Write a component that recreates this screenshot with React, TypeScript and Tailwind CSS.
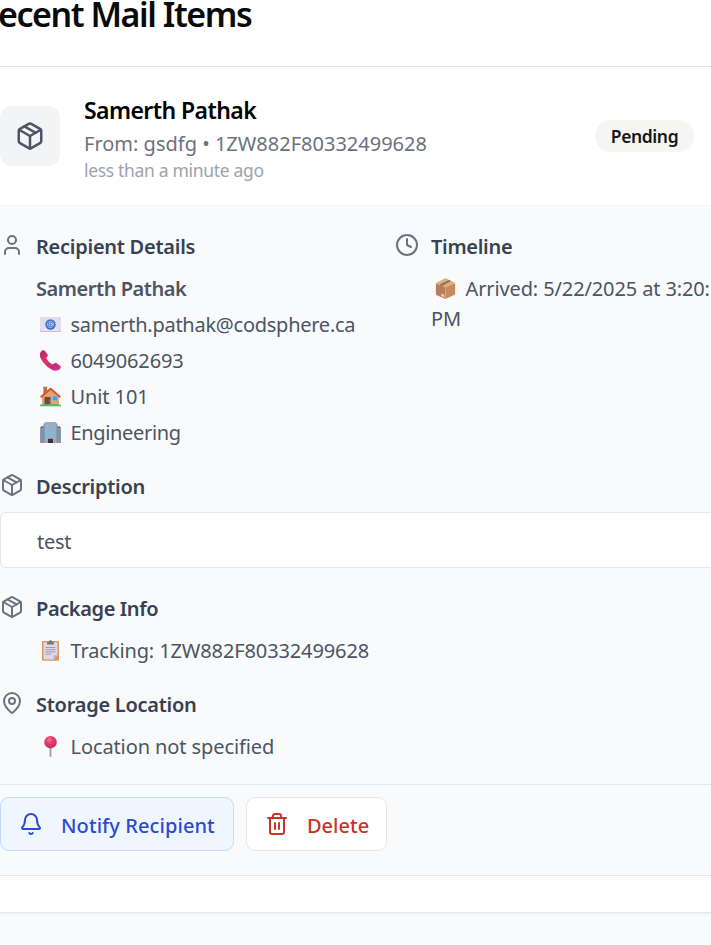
import type { ReactNode } from 'react';
import { Package, User, Clock, MapPin, Bell, Trash2 } from 'lucide-react';

function EnvelopeEmoji() {
  return (
    <svg width="21" height="21" viewBox="0 0 21 21">
      <rect x="0" y="3" width="21" height="15" rx="0.6" fill="#e5dcee" />
      <path d="M0 17.6L8 11h5l8 6.6z" fill="#ece5f4" />
      <path d="M0 3.6L9 11M21 3.6L12 11M0 17L7 12M21 17L14 12" stroke="#d2c6df" strokeWidth="0.5" />
      <path d="M0 17.4h21" stroke="#cdb5e3" strokeWidth="1" />
      <circle cx="10.5" cy="10.5" r="5.2" fill="#3c73c9" />
      <circle cx="10.5" cy="10.5" r="1.5" fill="none" stroke="#d9e4fa" strokeWidth="0.9" />
      <path d="M12.1 9v2.2c0 1.3 1.6 1 1.6-.7a3.2 3.2 0 1 0-1.6 2.8" fill="none" stroke="#c7d8f5" strokeWidth="0.7" />
    </svg>
  );
}

function PhoneEmoji() {
  return (
    <svg width="21" height="21" viewBox="0 0 21 21">
      <defs>
        <linearGradient id="phoneBody" x1="0" y1="0" x2="1" y2="1">
          <stop offset="0" stopColor="#a92c72" />
          <stop offset="0.35" stopColor="#e0335f" />
          <stop offset="0.75" stopColor="#c5307f" />
          <stop offset="1" stopColor="#d33aa0" />
        </linearGradient>
      </defs>
      <path d="M1.1 1.5C2.3.3 3.6-.3 4.6.6l2.800 3.600c.7 1 .5 1.900-.4 2.700-.7.6-.7 1.200-.2 2 1.400 2.300 2.700 3.700 5.100 5.100.8.5 1.400.4 2-.3.8-.9 1.800-1.200 2.800-.5l3.500 2.600c1.100.9.6 2.300-.7 3.500-1.500 1.500-4.500 1.900-7.200.600C7.600 17.700 3.100 13.100.5 8.100-.500 5.400-.2 2.900 1.100 1.500z" fill="url(#phoneBody)" />
      <path d="M2 1.200l4.800 5M14.300 14.200l5.300 5" stroke="#8f2c78" strokeWidth="0.800" opacity="0.5" />
    </svg>
  );
}

function HouseEmoji() {
  return (
    <svg width="21" height="21" viewBox="0 0 21 21">
      <rect x="3.400" y="1" width="3.600" height="8" fill="#a8764f" />
      <rect x="3" y="0.700" width="4.400" height="1.500" fill="#bd8a5c" />
      <path d="M2 10L10.500 3l8.500 7v9H2z" fill="#dfa76d" />
      <path d="M0 10.600L9.600 2.200c.7-.6 1.300-.6 2 0L21 10.600l-1.400 1.300-9-7.900-9.100 7.900z" fill="#e8502f" />
      <rect x="4.500" y="11" width="6" height="8" fill="#73493f" />
      <path d="M9 15h.8" stroke="#dca96f" strokeWidth="0.700" />
      <rect x="12.500" y="10" width="5" height="4.700" fill="#3ea4ea" stroke="#96c3dc" strokeWidth="0.600" />
      <path d="M0 18.800c3-1 18-1 21 0V20.300H0z" fill="#5bb263" />
    </svg>
  );
}

function BuildingEmoji() {
  const rows = [2.6, 6.2, 9.8, 13.4];
  return (
    <svg width="21" height="21" viewBox="0 0 21 21">
      <rect x="0" y="5" width="21" height="16" fill="#9693a7" />
      <rect x="1" y="4.200" width="3" height="2" fill="#777489" />
      <rect x="17" y="4.200" width="3" height="2" fill="#777489" />
      <path d="M4 1.500L5.500 0h10L17 1.500V21H4z" fill="#aaa6b7" />
      <path d="M4 1.500V21M17 1.500V21" stroke="#817d91" strokeWidth="0.700" />
      {rows.map((y) => (
        <g key={y} fill="#66c7f5">
          <rect x="6.200" y={y} width="2" height="2.200" />
          <rect x="9.500" y={y} width="2" height="2.200" />
          <rect x="12.800" y={y} width="2" height="2.200" />
        </g>
      ))}
      {[8, 11.6, 15.2].map((y) => (
        <g key={y} fill="#3ba6e2">
          <rect x="1" y={y} width="2" height="2.200" />
          <rect x="18" y={y} width="2" height="2.200" />
        </g>
      ))}
      <rect x="8" y="16.800" width="5" height="4.200" fill="#39333f" />
    </svg>
  );
}

function ClipboardEmoji() {
  return (
    <svg width="21" height="21" viewBox="0 0 21 21">
      <rect x="2" y="1" width="17" height="19.700" rx="0.700" fill="#d8985f" />
      <path d="M3.500 2.200h14v13l-4 4.200h-10z" fill="#ded8e8" />
      <path d="M17.500 15.200h-4v4.200z" fill="#b9adc6" />
      <path d="M5.500 7.500h10M5.500 9.700h10M5.500 11.900h10M5.500 14.100h6" stroke="#9995a8" strokeWidth="0.900" />
      <path d="M7 4.500V2.800c0-.6.4-.9 1-.9h.8C9-.2 12-.2 12.200 1.900h.8c.6 0 1 .3 1 .9v1.700z" fill="#77737f" />
    </svg>
  );
}

function PinEmoji() {
  return (
    <svg width="21" height="21" viewBox="0 0 21 21">
      <defs>
        <radialGradient id="pinHead" cx="0.400" cy="0.300" r="0.700">
          <stop offset="0" stopColor="#f5789b" />
          <stop offset="0.350" stopColor="#e9416c" />
          <stop offset="1" stopColor="#c92b5c" />
        </radialGradient>
      </defs>
      <rect x="9.600" y="10" width="1.800" height="11" rx="0.800" fill="#a797b4" />
      <circle cx="10.500" cy="6.200" r="6.200" fill="url(#pinHead)" />
    </svg>
  );
}

function BoxEmoji() {
  return (
    <svg width="21" height="21" viewBox="0 0 21 21">
      <path d="M.9 5.200L10.500 9v12L2 17.200c-.7-.3-1.100-.8-1.100-1.500z" fill="#b77e5d" />
      <path d="M20.100 5.200L10.500 9v12l8.500-3.900c.7-.3 1.100-.8 1.100-1.500z" fill="#c78b60" />
      <path d="M.9 5L9.700.4c.5-.3 1.100-.3 1.600 0L20.100 5l-9.600 4.600z" fill="#dcae80" />
      <path d="M4.600 6.700L14 1.900l2 1L6.800 7.900z" fill="#85604f" opacity="0.850" />
      <path d="M6.300 15.500l3 1.300v2.600l-3-1.300z" fill="#e8cbd5" />
    </svg>
  );
}

function SectionTitle({ icon, children, className }: { icon: ReactNode; children: string; className: string }) {
  return (
    <div className="flex h-[30px] gap-3">
      <div className="mt-[2px] h-6 w-6 shrink-0 text-[#6b7280]">{icon}</div>
      <h4 className={`text-[20px] font-[570] leading-8 whitespace-nowrap text-[#374151] ${className}`}>{children}</h4>
    </div>
  );
}

function Detail({ emoji, children, className }: { emoji: ReactNode; children: string; className: string }) {
  return (
    <div className="flex h-[30px] pl-[40px]">
      <span className="mt-[5px] mr-[9.500px] h-[21px] shrink-0">{emoji}</span>
      <span className={`text-[20px] leading-8 whitespace-nowrap ${className}`}>{children}</span>
    </div>
  );
}

export default function App() {
  return (
    <div className="h-[945px] w-[711px] overflow-hidden bg-[#f9fafb] font-['Noto_Sans',sans-serif] text-[#4b5563]">
      <div className="h-[913px] border-b border-[#e5e7eb] bg-white shadow-xs">
        <header className="flex h-[67px] items-start border-b border-[#e5e5e5]">
          <h1 className="-ml-[2px] text-[34px] font-[580] leading-[29px] tracking-[-1.450px] whitespace-nowrap text-[#0a0a0a]">
            ecent Mail Items
          </h1>
        </header>

        <div className="flex h-[138px] items-center bg-white pr-[17px]">
          <div className="flex h-[60px] w-[60px] shrink-0 items-center justify-center rounded-xl bg-[#f3f4f6] text-[#4b5563]">
            <Package size={30} />
          </div>
          <div className="ml-6 flex-1 whitespace-nowrap">
            <h3 className="text-[23px] font-[570] leading-[37px] tracking-[-0.580px] text-black">Samerth Pathak</h3>
            <p className="text-[20px] leading-[30px] text-[#6b7280]">From: gsdfg • 1ZW882F80332499628</p>
            <p className="text-[17.500px] leading-[22px] tracking-[-0.320px] text-[#9ca3af]">less than a minute ago</p>
          </div>
          <span className="flex h-8 w-[99px] items-center justify-center rounded-full bg-[#f5f5f4] pt-px text-[17.500px] font-[570] tracking-[-0.400px] text-[#171717]">
            Pending
          </span>
        </div>

        <div className="h-[671px] border-y border-t-[#f3f4f6] border-b-[#e5e7eb] bg-[#f9fafb]">
          <div className="flex h-[579px] flex-col gap-6 border-b border-[#e5e7eb] pt-[25px]">
            <div className="flex h-[216px]">
              <section className="flex w-[395px] shrink-0 flex-col">
                <SectionTitle icon={<User size={24} />} className="tracking-[-0.260px]">Recipient Details</SectionTitle>
                <div className="mt-3 flex flex-col gap-[6px]">
                  <p className="h-[30px] pl-9 text-[20px] font-[570] leading-8 tracking-[-0.450px]">Samerth Pathak</p>
                  <Detail emoji={<EnvelopeEmoji />} className="tracking-[-0.260px]">samerth.pathak@codsphere.ca</Detail>
                  <Detail emoji={<PhoneEmoji />} className="tracking-[-0.130px]">6049062693</Detail>
                  <Detail emoji={<HouseEmoji />} className="tracking-[-0.100px]">Unit 101</Detail>
                  <Detail emoji={<BuildingEmoji />} className="tracking-[-0.340px]">Engineering</Detail>
                </div>
              </section>
              <section className="flex shrink-0 flex-col">
                <SectionTitle icon={<Clock size={24} />} className="tracking-[-0.300px]">Timeline</SectionTitle>
                <div className="mt-3">
                  <Detail emoji={<BoxEmoji />} className="tracking-[-0.120px]">Arrived: 5/22/2025 at 3:20:</Detail>
                  <p className="pl-9 text-[20px] leading-8">PM</p>
                </div>
              </section>
            </div>

            <section>
              <SectionTitle icon={<Package size={24} />} className="tracking-[-0.270px]">Description</SectionTitle>
              <div className="-mr-2 mt-[11px] h-14 rounded-md border border-[#e5e7eb] bg-white pt-[13px] pl-9">
                <p className="text-[20px] leading-8 tracking-[-0.250px]">test</p>
              </div>
            </section>

            <section className="mt-px">
              <SectionTitle icon={<Package size={24} />} className="tracking-[-0.390px]">Package Info</SectionTitle>
              <div className="mt-3">
                <Detail emoji={<ClipboardEmoji />} className="tracking-[-0.120px]">Tracking: 1ZW882F80332499628</Detail>
              </div>
            </section>

            <section>
              <SectionTitle icon={<MapPin size={24} />} className="tracking-[-0.260px]">Storage Location</SectionTitle>
              <div className="mt-3">
                <Detail emoji={<PinEmoji />} className="tracking-[-0.100px]">Location not specified</Detail>
              </div>
            </section>
          </div>

          <div className="flex gap-3 pt-3 text-[20px] font-medium whitespace-nowrap">
            <button className="flex h-[54px] w-[234px] items-center rounded-[9px] border border-[#bfdbfe] bg-[#eff6ff] pl-[18px] text-[#2a4bd0]">
              <Bell size={24} />
              <span className="ml-[18px] pt-[3px] tracking-[0.080px]">Notify Recipient</span>
            </button>
            <button className="flex h-[54px] w-[141px] items-center rounded-[9px] border border-[#e5e5e5] bg-white pl-[18px] text-[#c93328]">
              <Trash2 size={24} />
              <span className="ml-[18px] pt-[3px]">Delete</span>
            </button>
          </div>
        </div>
      </div>
    </div>
  );
}
